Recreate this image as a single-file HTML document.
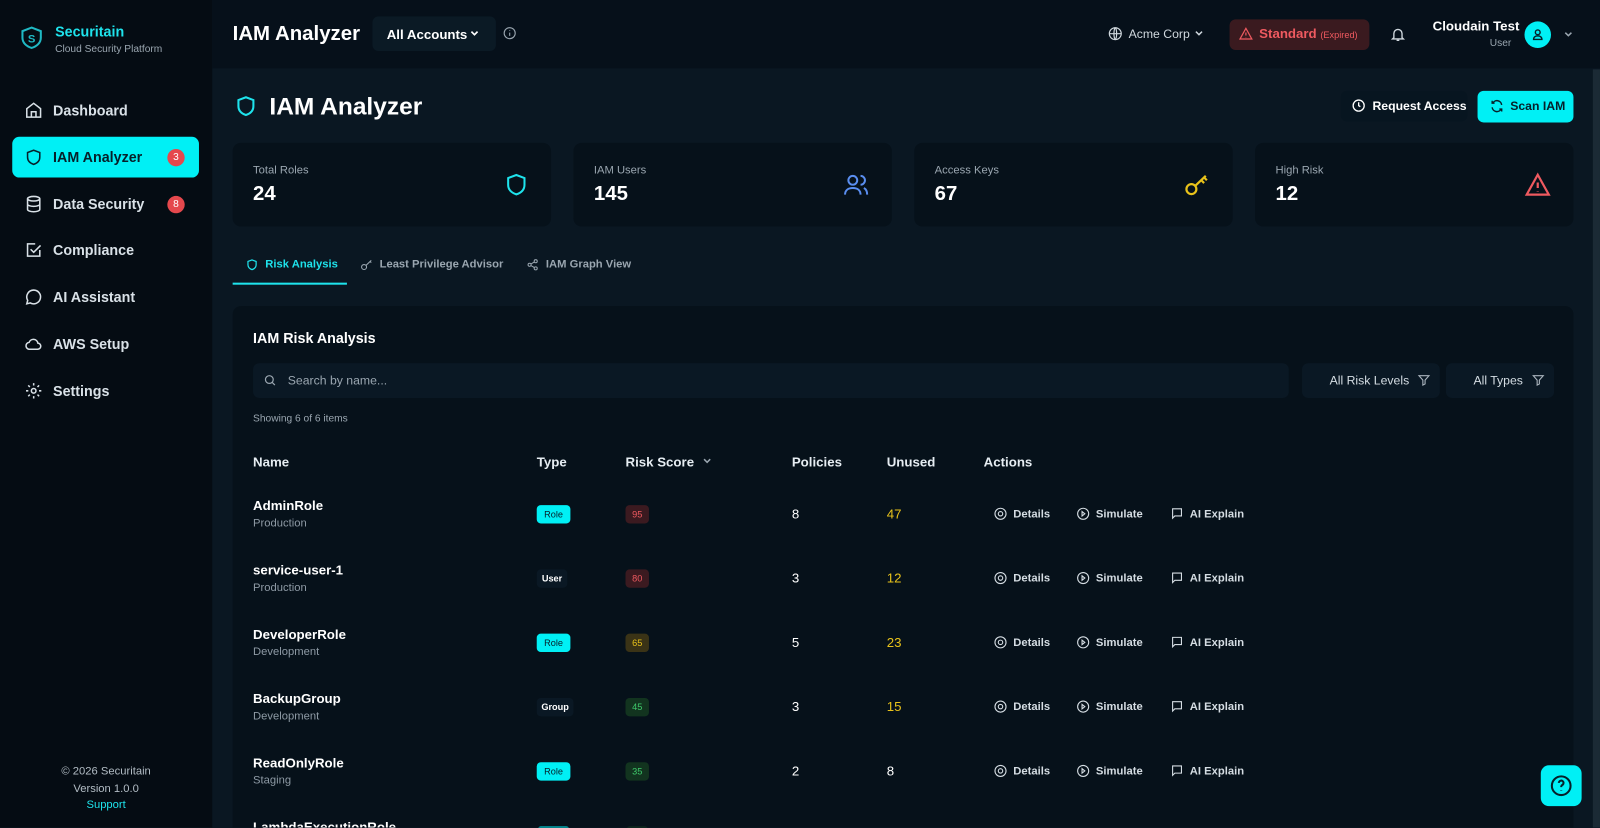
<!DOCTYPE html>
<html><head><meta charset="utf-8"><style>
*{box-sizing:border-box;margin:0;padding:0}
html,body{width:1600px;height:827px;overflow:hidden;background:#0a1722}
#wrap{position:absolute;left:0;top:0;width:1568px;height:811px;transform:scale(1.0204);transform-origin:0 0;font-family:"Liberation Sans",sans-serif;color:#e6edf2;overflow:hidden}
.abs{position:absolute}
svg{display:block}
.sb{left:0;top:0;width:208px;height:811px;background:#050c13}
.hd{left:208px;top:0;width:1360px;height:67px;background:#06101a}
.nav{position:absolute;left:12px;width:183px;height:40px;border-radius:7px;display:flex;align-items:center;padding-left:12px;font-size:14px;font-weight:bold;color:#d9e1e7}
.nav svg{margin-right:10px}
.badge{position:absolute;right:14px;width:17px;height:17px;border-radius:50%;background:#e5484d;color:#fff;font-size:10px;display:flex;align-items:center;justify-content:center;font-weight:normal}
.card{background:#06111a;border-radius:8px}
.stat{top:140px;width:312px;height:82px}
.stat .l{position:absolute;left:20px;top:21px;font-size:11px;color:#9aa6b0}
.stat .v{position:absolute;left:20px;top:39px;font-size:20px;font-weight:bold;color:#fff}
.stat svg{position:absolute;right:22px;top:28px}
.th{position:absolute;top:445px;font-size:13px;font-weight:bold;color:#e6edf2;white-space:nowrap}
.rn{position:absolute;left:248px;font-size:13px;font-weight:bold;color:#fff}
.rs{position:absolute;left:248px;font-size:11px;color:#8e9aa5}
.pill{position:absolute;height:18px;border-radius:4px;font-size:9px;display:flex;align-items:center;justify-content:center}
.num{position:absolute;font-size:13px}
.act{position:absolute;font-size:11px;font-weight:bold;color:#d5dde3;display:flex;align-items:center;white-space:nowrap}
.act svg{margin-right:6px}
div{white-space:nowrap}
</style></head><body><div id="wrap">
<div class="abs sb">
 <svg class="abs" style="left:20px;top:25px" width="22" height="24" viewBox="0 0 22 24"><path d="M11 2 L20 5.5 V12 C20 17 16 20.5 11 22 C6 20.5 2 17 2 12 V5.5Z" fill="none" stroke="#1fb9c4" stroke-width="2"/><text x="11" y="16.5" text-anchor="middle" font-size="11" font-weight="bold" fill="#1fb9c4" font-family="Liberation Sans">S</text></svg>
 <div class="abs" style="left:54px;top:23px;font-size:14px;font-weight:bold;color:#1ee3ec">Securitain</div>
 <div class="abs" style="left:54px;top:43px;font-size:10px;color:#9aa6b0">Cloud Security Platform</div>
 <div class="nav" style="top:88px"><svg width="18" height="18" viewBox="0 0 24 24" fill="none" stroke="#d9e1e7" stroke-width="2"><path d="M3 10 12 3l9 7v11H3z"/><path d="M9 21v-7h6v7"/></svg>Dashboard</div>
 <div class="nav" style="top:134px;background:#00f0f5;color:#06202a"><svg width="18" height="18" viewBox="0 0 24 24" fill="none" stroke="#06202a" stroke-width="2"><path d="M12 3l8 3v6c0 5-3.5 8-8 9.5C7.5 20 4 17 4 12V6z"/></svg>IAM Analyzer<span class="badge">3</span></div>
 <div class="nav" style="top:180px"><svg width="18" height="18" viewBox="0 0 24 24" fill="none" stroke="#d9e1e7" stroke-width="2"><ellipse cx="12" cy="5" rx="8" ry="3"/><path d="M4 5v14c0 1.7 3.6 3 8 3s8-1.3 8-3V5M4 12c0 1.7 3.6 3 8 3s8-1.3 8-3"/></svg>Data Security<span class="badge">8</span></div>
 <div class="nav" style="top:225px"><svg width="18" height="18" viewBox="0 0 24 24" fill="none" stroke="#d9e1e7" stroke-width="2"><path d="M20 12v8H4V4h10"/><path d="M8 11l4 4 9-9"/></svg>Compliance</div>
 <div class="nav" style="top:271px"><svg width="18" height="18" viewBox="0 0 24 24" fill="none" stroke="#d9e1e7" stroke-width="2"><path d="M12 3a9 9 0 1 1-4.5 16.8L3 21l1.2-4.5A9 9 0 0 1 12 3z"/></svg>AI Assistant</div>
 <div class="nav" style="top:317px"><svg width="18" height="18" viewBox="0 0 24 24" fill="none" stroke="#d9e1e7" stroke-width="2"><path d="M7 19h10a4 4 0 0 0 .5-8A6 6 0 0 0 6 10a4.5 4.5 0 0 0 1 9z"/></svg>AWS Setup</div>
 <div class="nav" style="top:363px"><svg width="18" height="18" viewBox="0 0 24 24" fill="none" stroke="#d9e1e7" stroke-width="2"><circle cx="12" cy="12" r="3"/><path d="M12 2v3M12 19v3M2 12h3M19 12h3M4.9 4.9l2.1 2.1M17 17l2.1 2.1M4.9 19.1 7 17M17 7l2.1-2.1"/></svg>Settings</div>
 <div class="abs" style="left:0;width:208px;top:748px;text-align:center;font-size:11px;color:#b3bdc5;line-height:17px;white-space:normal">© 2026 Securitain<br>Version 1.0.0</div>
 <div class="abs" style="left:0;width:208px;top:783px;text-align:center;font-size:11px;color:#1ee3ec">Support</div>
</div>
<div class="abs hd">
 <div class="abs" style="left:20px;top:22px;font-size:20px;font-weight:bold;color:#fff">IAM Analyzer</div>
 <div class="abs" style="left:157px;top:16px;width:121px;height:34px;background:#0b1a25;border-radius:6px;font-size:13px;font-weight:bold;padding:10px 14px;color:#fff">All Accounts</div>
 <svg class="abs" style="left:252px;top:29px" width="10" height="8" viewBox="0 0 10 8" fill="none" stroke="#fff" stroke-width="1.6"><path d="M2 2l3 3 3-3"/></svg>
 <svg class="abs" style="left:285px;top:26px" width="13" height="13" viewBox="0 0 24 24" fill="none" stroke="#9aa6b0" stroke-width="2"><circle cx="12" cy="12" r="10"/><path d="M12 11v6M12 7v1"/></svg>
 <svg class="abs" style="left:878px;top:26px" width="14" height="14" viewBox="0 0 24 24" fill="none" stroke="#d0d8de" stroke-width="2"><circle cx="12" cy="12" r="10"/><path d="M2 12h20M12 2c3 3 3 17 0 20M12 2c-3 3-3 17 0 20"/></svg>
 <div class="abs" style="left:898px;top:26px;font-size:12px;color:#d0d8de">Acme Corp</div>
 <svg class="abs" style="left:962px;top:29px" width="10" height="8" viewBox="0 0 10 8" fill="none" stroke="#d0d8de" stroke-width="1.5"><path d="M2 2l3 3 3-3"/></svg>
 <div class="abs" style="left:997px;top:19px;width:137px;height:30px;background:#3a1a1f;border-radius:6px"></div>
 <svg class="abs" style="left:1006px;top:26px" width="14" height="14" viewBox="0 0 24 24" fill="none" stroke="#ef5a60" stroke-width="2"><path d="M12 3 2 21h20z"/><path d="M12 10v5M12 18v.5"/></svg>
 <div class="abs" style="left:1026px;top:25px;font-size:13px;font-weight:bold;color:#ef5a60">Standard <span style="font-size:9px;font-weight:normal">(Expired)</span></div>
 <svg class="abs" style="left:1154px;top:25px" width="16" height="17" viewBox="0 0 24 24" fill="none" stroke="#d0d8de" stroke-width="2"><path d="M6 17V11a6 6 0 0 1 12 0v6l2 2H4z"/><path d="M10 21h4"/></svg>
 <div class="abs" style="left:1196px;top:18px;font-size:13px;font-weight:bold;color:#fff">Cloudain Test</div>
 <div class="abs" style="left:1252px;top:37px;font-size:10px;color:#9aa6b0">User</div>
 <div class="abs" style="left:1286px;top:21px;width:26px;height:26px;border-radius:50%;background:#00f0f5"></div>
 <svg class="abs" style="left:1292px;top:27px" width="14" height="14" viewBox="0 0 24 24" fill="none" stroke="#06202a" stroke-width="2.4"><circle cx="12" cy="8" r="4"/><path d="M5 20c0-4 3-6 7-6s7 2 7 6z"/></svg>
 <svg class="abs" style="left:1324px;top:30px" width="10" height="8" viewBox="0 0 10 8" fill="none" stroke="#9aa6b0" stroke-width="1.5"><path d="M2 2l3 3 3-3"/></svg>
</div>
<div class="abs" style="left:1561px;top:68px;width:7px;height:759px;background:#1b2a35"></div>
<svg class="abs" style="left:230px;top:92px" width="22" height="24" viewBox="0 0 24 24" fill="none" stroke="#1ee3ec" stroke-width="2.2"><path d="M12 2.5l8 3v6.5c0 5-3.5 8-8 9.5C7.5 20 4 17 4 12V5.5z"/></svg>
<div class="abs" style="left:264px;top:91px;font-size:24px;font-weight:bold;color:#fff">IAM Analyzer</div>
<div class="abs" style="left:1314px;top:89px;width:124px;height:30px;background:#071520;border-radius:6px"></div>
<svg class="abs" style="left:1325px;top:97px" width="13" height="13" viewBox="0 0 24 24" fill="none" stroke="#fff" stroke-width="2.4"><circle cx="12" cy="12" r="10"/><path d="M12 6v6l3 2"/></svg>
<div class="abs" style="left:1345px;top:97px;font-size:12px;font-weight:bold;color:#fff">Request Access</div>
<div class="abs" style="left:1448px;top:89px;width:94px;height:31px;background:#00f0f5;border-radius:6px"></div>
<svg class="abs" style="left:1460px;top:97px" width="14" height="14" viewBox="0 0 24 24" fill="none" stroke="#06202a" stroke-width="2.4"><path d="M20 10a8 8 0 0 0-15-3M4 14a8 8 0 0 0 15 3"/><path d="M4 3v4h4M20 21v-4h-4"/></svg>
<div class="abs" style="left:1480px;top:97px;font-size:12px;font-weight:bold;color:#06202a">Scan IAM</div>

<div class="abs card stat" style="left:228px"><div class="l">Total Roles</div><div class="v">24</div><svg width="24" height="26" viewBox="0 0 24 24" fill="none" stroke="#1ee3ec" stroke-width="2"><path d="M12 2.5l8 3v6.5c0 5-3.5 8-8 9.5C7.5 20 4 17 4 12V5.5z"/></svg></div>
<div class="abs card stat" style="left:562px"><div class="l">IAM Users</div><div class="v">145</div><svg width="26" height="26" viewBox="0 0 24 24" fill="none" stroke="#5a8ef0" stroke-width="1.8"><circle cx="9" cy="8" r="4"/><path d="M2 21c0-4 3-6 7-6s7 2 7 6M16 4a4 4 0 0 1 0 8M19 15c2 1 3 3 3 6"/></svg></div>
<div class="abs card stat" style="left:896px"><div class="l">Access Keys</div><div class="v">67</div><svg width="26" height="26" viewBox="0 0 24 24" fill="none" stroke="#e8c21a" stroke-width="2"><circle cx="7" cy="16" r="4.5"/><path d="M10.5 13 20 4M16 8l2.5 2.5M18.5 5.5 21 8"/></svg></div>
<div class="abs card stat" style="left:1230px"><div class="l">High Risk</div><div class="v">12</div><svg width="26" height="26" viewBox="0 0 24 24" fill="none" stroke="#ef5a60" stroke-width="2"><path d="M12 3 2 21h20z"/><path d="M12 10v5M12 18v.5"/></svg></div>

<svg class="abs" style="left:241px;top:253px" width="12" height="13" viewBox="0 0 24 24" fill="none" stroke="#1ee3ec" stroke-width="2.4"><path d="M12 2.5l8 3v6.5c0 5-3.5 8-8 9.5C7.5 20 4 17 4 12V5.5z"/></svg>
<div class="abs" style="left:260px;top:253px;font-size:11px;font-weight:bold;color:#1ee3ec">Risk Analysis</div>
<div class="abs" style="left:228px;top:277px;width:112px;height:2px;background:#1ee3ec"></div>
<svg class="abs" style="left:353px;top:253px" width="13" height="13" viewBox="0 0 24 24" fill="none" stroke="#9aa6b0" stroke-width="2"><circle cx="7" cy="16" r="4.5"/><path d="M10.5 13 20 4M18 6l2 2"/></svg>
<div class="abs" style="left:372px;top:253px;font-size:11px;font-weight:bold;color:#9aa6b0">Least Privilege Advisor</div>
<svg class="abs" style="left:516px;top:253px" width="12" height="13" viewBox="0 0 24 24" fill="none" stroke="#9aa6b0" stroke-width="2"><circle cx="18" cy="5" r="3"/><circle cx="6" cy="12" r="3"/><circle cx="18" cy="19" r="3"/><path d="M8.6 13.5l6.8 4M15.4 6.5l-6.8 4"/></svg>
<div class="abs" style="left:535px;top:253px;font-size:11px;font-weight:bold;color:#9aa6b0">IAM Graph View</div>

<div class="abs card" style="left:228px;top:300px;width:1314px;height:540px;background:#06111a"></div>
<div class="abs" style="left:248px;top:323px;font-size:14px;font-weight:bold;color:#fff">IAM Risk Analysis</div>
<div class="abs" style="left:248px;top:356px;width:1015px;height:34px;background:#0a1824;border-radius:6px"></div>
<svg class="abs" style="left:258px;top:366px" width="13" height="13" viewBox="0 0 24 24" fill="none" stroke="#9aa6b0" stroke-width="2.2"><circle cx="11" cy="11" r="7"/><path d="M16 16l5 5"/></svg>
<div class="abs" style="left:282px;top:366px;font-size:12px;color:#9aa6b0">Search by name...</div>
<div class="abs" style="left:1276px;top:356px;width:135px;height:34px;background:#0a1824;border-radius:6px;font-size:12px;color:#d5dde3;padding:10px 0 0 27px">All Risk Levels</div>
<svg class="abs" style="left:1389px;top:366px" width="13" height="13" viewBox="0 0 24 24" fill="none" stroke="#aab4bd" stroke-width="2"><path d="M3 4h18l-7 8v7l-4 2v-9z"/></svg>
<div class="abs" style="left:1417px;top:356px;width:106px;height:34px;background:#0a1824;border-radius:6px;font-size:12px;color:#d5dde3;padding:10px 0 0 27px">All Types</div>
<svg class="abs" style="left:1501px;top:366px" width="13" height="13" viewBox="0 0 24 24" fill="none" stroke="#aab4bd" stroke-width="2"><path d="M3 4h18l-7 8v7l-4 2v-9z"/></svg>
<div class="abs" style="left:248px;top:405px;font-size:10px;color:#9aa6b0">Showing 6 of 6 items</div>

<div class="th" style="left:248px">Name</div><div class="th" style="left:526px">Type</div><div class="th" style="left:613px">Risk Score</div>
<svg class="abs" style="left:688px;top:448px" width="10" height="8" viewBox="0 0 10 8" fill="none" stroke="#9aa6b0" stroke-width="1.5"><path d="M2 2l3 3 3-3"/></svg>
<div class="th" style="left:776px">Policies</div><div class="th" style="left:869px">Unused</div><div class="th" style="left:964px">Actions</div>

<div id="rows"></div>
<script>
var d=[["AdminRole","Production","Role","95","#3b1a20","#ef5a60","8","47","#e8c21a"],
["service-user-1","Production","User","80","#3b1a20","#ef5a60","3","12","#e8c21a"],
["DeveloperRole","Development","Role","65","#3a3316","#e8c21a","5","23","#e8c21a"],
["BackupGroup","Development","Group","45","#12341f","#3fca6b","3","15","#e8c21a"],
["ReadOnlyRole","Staging","Role","35","#12341f","#3fca6b","2","8","#fff"],
["LambdaExecutionRole","Production","Role","20","#12341f","#3fca6b","1","0","#fff"]];
var h="";
d.forEach(function(r,i){var y=488+i*63;
h+='<div class="rn" style="top:'+y+'px">'+r[0]+'</div><div class="rs" style="top:'+(y+19)+'px">'+r[1]+'</div>';
var cy=y+7;
if(r[2]=="Role")h+='<div class="pill" style="left:526px;top:'+cy+'px;width:33px;background:#00f0f5;color:#06202a">Role</div>';
else h+='<div class="pill" style="left:526px;top:'+cy+'px;width:'+(r[2]=="User"?30:36)+'px;background:#0a1824;color:#fff;font-weight:bold">'+r[2]+'</div>';
h+='<div class="pill" style="left:613px;top:'+cy+'px;width:23px;background:'+r[4]+';color:'+r[5]+'">'+r[3]+'</div>';
h+='<div class="num" style="left:776px;top:'+(y+8)+'px;color:#fff">'+r[6]+'</div><div class="num" style="left:869px;top:'+(y+8)+'px;color:'+r[8]+'">'+r[7]+'</div>';
var ay=y+9;
h+='<div class="act" style="left:974px;top:'+ay+'px"><svg width="13" height="13" viewBox="0 0 24 24" fill="none" stroke="#d5dde3" stroke-width="2"><circle cx="12" cy="12" r="10"/><circle cx="12" cy="12" r="4"/></svg>Details</div>';
h+='<div class="act" style="left:1055px;top:'+ay+'px"><svg width="13" height="13" viewBox="0 0 24 24" fill="none" stroke="#d5dde3" stroke-width="2"><circle cx="12" cy="12" r="10"/><path d="M10 8l5 4-5 4z"/></svg>Simulate</div>';
h+='<div class="act" style="left:1147px;top:'+ay+'px"><svg width="13" height="13" viewBox="0 0 24 24" fill="none" stroke="#d5dde3" stroke-width="2"><path d="M4 3h16v13H8l-4 4z"/></svg>AI Explain</div>';
});
document.getElementById("rows").innerHTML=h;
</script>
<div class="abs" style="left:1510px;top:750px;width:40px;height:40px;background:#00f0f5;border-radius:8px"></div>
<svg class="abs" style="left:1519px;top:759px" width="22" height="22" viewBox="0 0 24 24" fill="none" stroke="#06202a" stroke-width="2.2"><circle cx="12" cy="12" r="10"/><path d="M9.5 9a2.5 2.5 0 1 1 3.5 2.3c-.7.4-1 1-1 1.7v.5M12 17v.5"/></svg>
</div></body></html>
